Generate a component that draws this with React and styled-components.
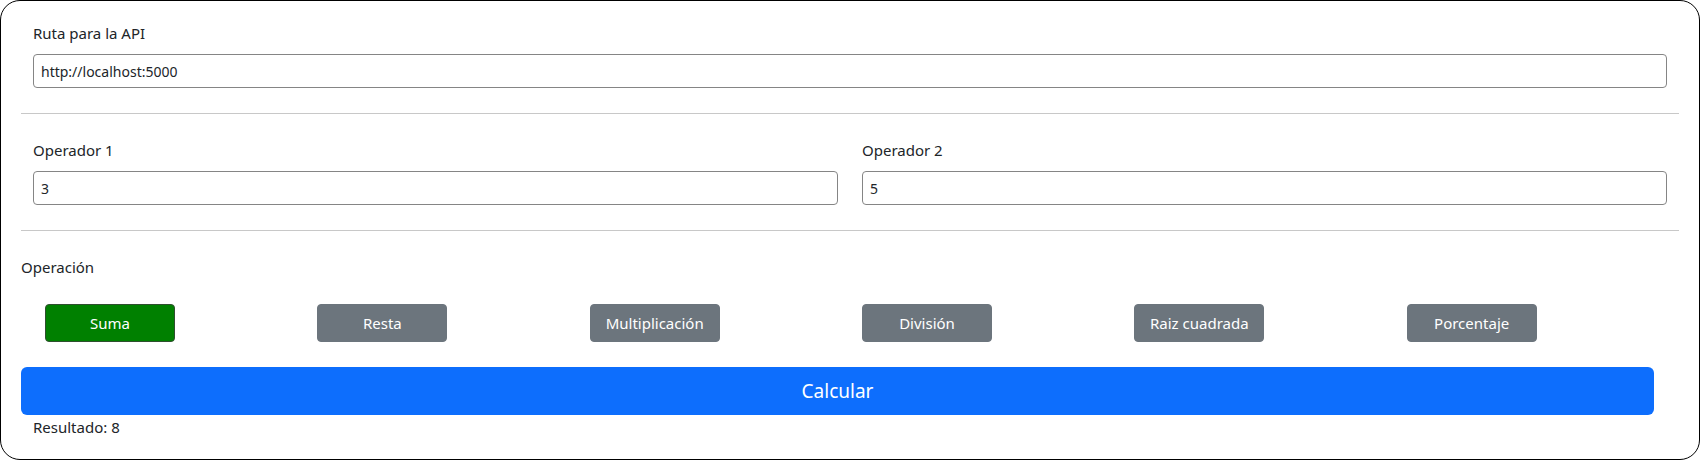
import React from 'react';
import styled, { createGlobalStyle } from 'styled-components';

const GlobalStyle = createGlobalStyle`
  html, body {
    margin: 0;
    padding: 0;
    background: #fff;
  }
  body {
    font-family: 'Noto Sans', 'Open Sans', sans-serif;
    font-size: 16px;
    line-height: 1.5;
    color: #212529;
  }
  * { box-sizing: border-box; }
`;

const Card = styled.div`
  height: 460px;
  border: 1px solid #000;
  border-radius: 20px;
  padding: 21px 20px 0;
  overflow: hidden;
`;

const Section = styled.div`
  padding: 0 12px 25px;
`;

const Columns = styled.div`
  display: grid;
  grid-template-columns: 1fr 1fr;
  column-gap: 24px;
`;

const Label = styled.label`
  display: block;
  height: 24px;
  margin-bottom: 8px;
  font-size: 15px;
`;

const Input = styled.input`
  display: block;
  width: 100%;
  height: 34px;
  padding: 0 7px;
  border: 1px solid #858585;
  border-radius: 4px;
  font-family: inherit;
  font-size: 14px;
  color: #212529;
  background: #fff;
  outline: none;
`;

const Rule = styled.hr`
  margin: 0 0 25px;
  border: 0;
  border-top: 1px solid #c8c8c8;
`;

const OpLabel = styled.div`
  height: 24px;
  margin-top: 4px;
  margin-bottom: 24px;
  font-size: 15px;
`;

const Operations = styled.div`
  display: grid;
  grid-template-columns: repeat(6, 1fr);
  margin-right: 24px;
`;

const OpButton = styled.button`
  width: 130px;
  height: 38px;
  margin-left: 24px;
  border: 1px solid ${p => (p.$active ? '#2f4f2f' : '#6c757d')};
  border-radius: 4px;
  background: ${p => (p.$active ? '#008000' : '#6c757d')};
  color: #fff;
  font-family: inherit;
  font-size: 15px;
  cursor: pointer;
`;

const CalcButton = styled.button`
  display: block;
  width: calc(100% - 25px);
  height: 48px;
  margin-top: 25px;
  border: 0;
  border-radius: 6px;
  background: #0d6efd;
  color: #fff;
  font-family: inherit;
  font-size: 19px;
  cursor: pointer;
`;

const Result = styled.div`
  padding: 1px 12px 0;
  font-size: 15px;
`;

const operations = ['Suma', 'Resta', 'Multiplicación', 'División', 'Raiz cuadrada', 'Porcentaje'];

export default function App() {
  return (
    <>
      <GlobalStyle />
      <Card>
        <Section>
          <Label>Ruta para la API</Label>
          <Input defaultValue="http://localhost:5000" />
        </Section>
        <Rule />
        <Section>
          <Columns>
            <div>
              <Label>Operador 1</Label>
              <Input defaultValue="3" />
            </div>
            <div>
              <Label>Operador 2</Label>
              <Input defaultValue="5" />
            </div>
          </Columns>
        </Section>
        <Rule />
        <OpLabel>Operación</OpLabel>
        <Operations>
          {operations.map((op, i) => (
            <div key={op}>
              <OpButton $active={i === 0}>{op}</OpButton>
            </div>
          ))}
        </Operations>
        <CalcButton>Calcular</CalcButton>
        <Result>Resultado: 8</Result>
      </Card>
    </>
  );
}
